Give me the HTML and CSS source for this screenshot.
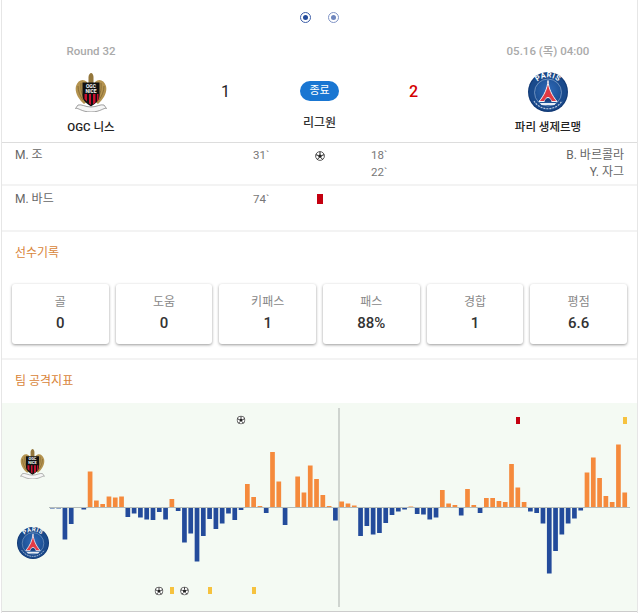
FILE: index.html
```html
<!DOCTYPE html>
<html lang="ko">
<head>
<meta charset="utf-8">
<title>OGC 니스 - 파리 생제르맹</title>
<link rel="stylesheet" href="styles.css">
</head>
<body>
<svg class="defs" width="0" height="0" aria-hidden="true">
  <defs>
    <radialGradient id="psgBlue" cx="50%" cy="40%" r="60%">
      <stop offset="0" stop-color="#2f6ab8"/>
      <stop offset="1" stop-color="#1b4d90"/>
    </radialGradient>
    <symbol id="crest" viewBox="0 0 32 39">
      <path d="M12 9C8 5 3 7 1 13c-1.500 6 2 13 8 18l4-3zM20 9c4-4 9-2 11 4 1.500 6-2 13-8 18l-4-3z" fill="#b4934f"/>
      <path d="M3 13c0 5 2 10 5 14M6 10c-.5 5 0 10 3 14M29 13c0 5-2 10-5 14M26 10c.5 5 0 10-3 14" stroke="#7f6633" stroke-width=".8" fill="none"/>
      <path d="M13.500 10V4c0-2 1.500-4 2.700-4 1 0 2.300 2 2.300 4v6z" fill="#94773c"/>
      <path d="M7.500 9.500h17V23c0 4.500-4 7.500-8.500 10.500C11.500 30.500 7.500 27.500 7.500 23z" fill="#111"/>
      <text class="crest-text" x="16" y="14.500">OGC</text>
      <text class="crest-text" x="16" y="19.500">NICE</text>
      <path d="M9.500 21h2.500v7.500l-2.500-2.500zM14 21h2v11l-2-1.500zM18 21h2.500v8.500l-2.500 2zM22 21h1.500v6l-1.500 1.500z" fill="#c8102e"/>
      <path d="M3 32c4-1 7 2 13 2s9-3 13-2l2.500 3.500c-3-1-6 3.500-15.500 3.500S3.500 34.500.500 35.500z" fill="#f6f6f6" stroke="#777" stroke-width=".7"/>
    </symbol>
    <symbol id="psg" viewBox="0 0 40 40">
      <circle cx="20" cy="20" r="20" fill="#123a76"/>
      <circle cx="20" cy="20" r="18.800" fill="#1a4a8c"/>
      <circle cx="20" cy="20.500" r="13.500" fill="url(#psgBlue)" stroke="#9fb8d8" stroke-width=".6"/>
      <path id="psgArc" d="M4.500 21a15.500 15.500 0 0 1 31 0" fill="none"/>
      <text class="psg-text"><textPath href="#psgArc" startOffset="50%" text-anchor="middle">PARIS</textPath></text>
      <path d="M20 8.500c.5 8 4 15 9 21h-5.500c-1-3-2-4-3.500-4s-2.500 1-3.500 4H11c5-6 8.500-13 9-21z" fill="#e23a44" stroke="#f2f4f8" stroke-width="1"/>
      <path d="M16.500 29.500c1-2.500 2-3 3.500-3s2.500.5 3.500 3z" fill="#1b3f7c"/>
      <path d="M12 31h16l-1.500 2h-13z" fill="#e8eef6"/>
      <path d="M6 29a16.500 16.500 0 0 0 28 0" fill="none" stroke="#b9c8de" stroke-width="1.200" stroke-dasharray="2 1"/>
    </symbol>
    <symbol id="ball" viewBox="0 0 10 10">
      <circle cx="5" cy="5" r="4.400" fill="#fff" stroke="#333" stroke-width=".8"/>
      <path d="M5 3l2 1.400-.8 2.400H3.800L3 4.400z" fill="#222"/>
      <path d="M5 .8V3M.9 3.700L3 4.400M9.100 3.700L7 4.400M2.400 8.500l1.400-1.700M7.600 8.500L6.200 6.800" stroke="#222" stroke-width="1"/>
    </symbol>
  </defs>
</svg>
<main class="page">
  <nav class="dots">
    <span class="dot"></span>
    <span class="dot dot-alt"></span>
  </nav>

  <section class="head">
    <div class="team">
      <div class="meta">Round 32</div>
      <svg class="logo logo-nice"><use href="#crest"/></svg>
      <div class="team-name">OGC 니스</div>
    </div>
    <div class="middle">
      <div class="score">1</div>
      <div class="badge">종료</div>
      <div class="score score-win">2</div>
      <div class="league">리그원</div>
    </div>
    <div class="team">
      <div class="meta">05.16 (목) 04:00</div>
      <svg class="logo logo-psg"><use href="#psg"/></svg>
      <div class="team-name">파리 생제르맹</div>
    </div>
  </section>

  <section class="event event-goal">
    <div>M. 조</div>
    <div class="minute">31`</div>
    <div class="mark"><svg class="ball"><use href="#ball"/></svg></div>
    <div class="minute minute-away">18`<br>22`</div>
    <div class="name-away">B. 바르콜라<br>Y. 자그</div>
  </section>
  <section class="event event-card">
    <div>M. 바드</div>
    <div class="minute">74`</div>
    <div class="mark"><span class="red"></span></div>
    <div class="minute minute-away"></div>
    <div class="name-away"></div>
  </section>

  <section class="records">
    <h2 class="title">선수기록</h2>
    <div class="stats">
      <div class="stat"><div class="stat-label">골</div><div class="stat-value">0</div></div>
      <div class="stat"><div class="stat-label">도움</div><div class="stat-value">0</div></div>
      <div class="stat"><div class="stat-label">키패스</div><div class="stat-value">1</div></div>
      <div class="stat"><div class="stat-label">패스</div><div class="stat-value">88%</div></div>
      <div class="stat"><div class="stat-label">경합</div><div class="stat-value">1</div></div>
      <div class="stat"><div class="stat-label">평점</div><div class="stat-value">6.6</div></div>
    </div>
  </section>

  <section class="attack">
    <h2 class="title">팀 공격지표</h2>
    <svg class="chart" id="chart" viewBox="2 403 635 208" width="635" height="209">
      <use href="#crest" x="20" y="449" width="25" height="30"/>
      <use href="#psg" x="17" y="527" width="32" height="32"/>
      <line class="divider" x1="339" y1="408" x2="339" y2="607"/>
      <g id="bars"></g>
      <line class="axis" x1="49" y1="507.500" x2="630" y2="507.500"/>
      <use href="#ball" x="236.500" y="415.500" width="9" height="9"/>
      <rect class="c-red" x="516" y="417" width="4" height="7"/>
      <rect class="c-yellow" x="623" y="417" width="4" height="7"/>
      <use href="#ball" x="154.500" y="586.500" width="9" height="9"/>
      <rect class="c-yellow" x="170" y="587" width="4" height="7"/>
      <use href="#ball" x="180" y="586.500" width="9" height="9"/>
      <rect class="c-yellow" x="208" y="587" width="4" height="7"/>
      <rect class="c-yellow" x="252" y="587" width="4" height="7"/>
    </svg>
  </section>
</main>
<script src="app.js"></script>
</body>
</html>
```
FILE: styles.css
```css
* { box-sizing: border-box; }
html, body { margin: 0; padding: 0; background: #fff; }
body { font-family: Roboto, "Noto Sans CJK KR", sans-serif; font-size: 12px; color: #666; overflow: hidden; }
.defs { position: absolute; }

.page {
  width: 637px;
  height: 613px;
  margin-left: 1px;
  border-left: 1px solid #e6e6e6;
  border-right: 1px solid #e6e6e6;
  background: #fff;
}

.dots { display: flex; justify-content: center; gap: 17px; height: 44px; padding-top: 12px; }
.dot { width: 11px; height: 11px; border: 1px solid #3d5ea8; border-radius: 50%; position: relative; }
.dot::after { content: ""; position: absolute; inset: 2px; border-radius: 50%; background: #234b9b; }
.dot-alt { border-color: #8094c6; }
.dot-alt::after { background: #6f86bd; }

.head { display: grid; grid-template-columns: 178px 1fr 178px; height: 99px; border-bottom: 1px solid #ddd; }
.team { display: flex; flex-direction: column; align-items: center; }
.meta { font-size: 11.500px; font-weight: 500; line-height: 14px; color: #aaa; }
.logo { display: block; margin-top: 14px; }
.logo-nice { width: 32px; height: 39px; margin-top: 15px; }
.logo-psg { width: 40px; height: 40px; }
.team-name { margin-top: 8px; font-size: 11.500px; font-weight: 500; line-height: 14px; color: #222; }

.middle { display: grid; grid-template-columns: 91px 1fr 91px; grid-template-rows: 20px 14px; row-gap: 15px; padding-top: 37px; justify-items: center; align-items: center; }
.score { font-size: 16px; line-height: 21px; color: #222; }
.score-win { color: #d40000; font-weight: 500; }
.badge { width: 39px; height: 20px; border-radius: 10px; background: #1976d2; color: #fff; font-size: 11px; line-height: 20px; text-align: center; }
.league { grid-column: 2; font-size: 12px; font-weight: 500; line-height: 14px; color: #333; }

.event { display: grid; grid-template-columns: 238px 47px 40px 31px 1fr; padding: 4px 13px 0; line-height: 17px; border-bottom: 2px solid #f3f3f3; }
.event-goal { height: 43px; }
.event-card { height: 46px; padding-top: 5px; }
.minute { color: #777; font-size: 11.500px; }
.minute-away { grid-column: 4 / span 1; margin-left: 31px; white-space: nowrap; }
.name-away { text-align: right; }
.mark { display: flex; justify-content: center; height: 17px; align-items: center; }
.ball { width: 10px; height: 10px; display: block; }
.red { width: 6px; height: 10px; margin-top: -2px; background: #c40010; display: block; }

.title { margin: 0; padding-left: 13px; font-size: 12px; font-weight: 400; line-height: 14px; color: #d9853a; }
.records { height: 128px; padding-top: 14px; border-bottom: 2px solid #f3f3f3; }
.stats { display: grid; grid-template-columns: repeat(6, 1fr); gap: 7px; padding: 0 10px; margin-top: 24px; }
.stat { height: 60px; border-radius: 3px; background: #fff; box-shadow: 0 1px 3px rgba(0, 0, 0, .4); text-align: center; padding-top: 11px; }
.stat-label { font-size: 12px; line-height: 15px; color: #888; }
.stat-value { margin-top: 3px; font-size: 15px; font-weight: 500; line-height: 20px; color: #333; }

.attack { padding-top: 14px; }
.attack .title { margin-bottom: 15px; }
.chart { display: block; background: #f4faf3; border-bottom: 1px solid #ccc; }
.divider { stroke: #a9aeab; stroke-width: 1; }
.axis { stroke: #b4bbb9; stroke-width: 1; }
.b-up { fill: #f58a3c; }
.b-down { fill: #234b9b; }
.c-red { fill: #c40010; }
.c-yellow { fill: #f6c23e; }
.psg-text { font-family: Roboto, sans-serif; font-size: 7.500px; font-weight: 700; fill: #fff; letter-spacing: .5px; }
.crest-text { font-family: Roboto, sans-serif; font-size: 5px; font-weight: 700; fill: #fff; text-anchor: middle; }
```
FILE: app.js
```js
var data = [-1,-1,-32,-16.5,-.4,-2,36,7,3.5,11,10,11,-9.5,-6,-10,-12,-12.5,-4.5,-12,8.5,
  -3.5,-35,-26,-54,-28.5,-11.5,-21.5,-16,-6,-12.5,-2.5,23.5,10.5,1.5,-5.5,55.5,26,-17.5,-.5,31,
  15,42,28.5,12.5,1.5,-13,6,4,2,-28.5,-18.5,-27,-25.5,-15.5,-7.5,-4,-2,1,-6.5,-7,
  -12,-10,17.5,4,2.5,-8,18.5,2.5,-5.5,9.5,9.5,6.5,5.5,43.5,20,5.5,-4,-5.5,-16,-66,
  -43.5,-27,-16,-11,-3,35,50,29.5,11.5,5.5,63,15];
var group = document.getElementById('bars');
data.forEach(function (v, i) {
  var r = document.createElementNS('http://www.w3.org/2000/svg', 'rect');
  var h = Math.abs(v);
  r.setAttribute('x', (50 + 6.29 * i).toFixed(2));
  r.setAttribute('y', v > 0 ? 507.5 - h : 507.5);
  r.setAttribute('width', 4.7);
  r.setAttribute('height', h);
  r.setAttribute('class', v > 0 ? 'b-up' : 'b-down');
  group.appendChild(r);
});
```
